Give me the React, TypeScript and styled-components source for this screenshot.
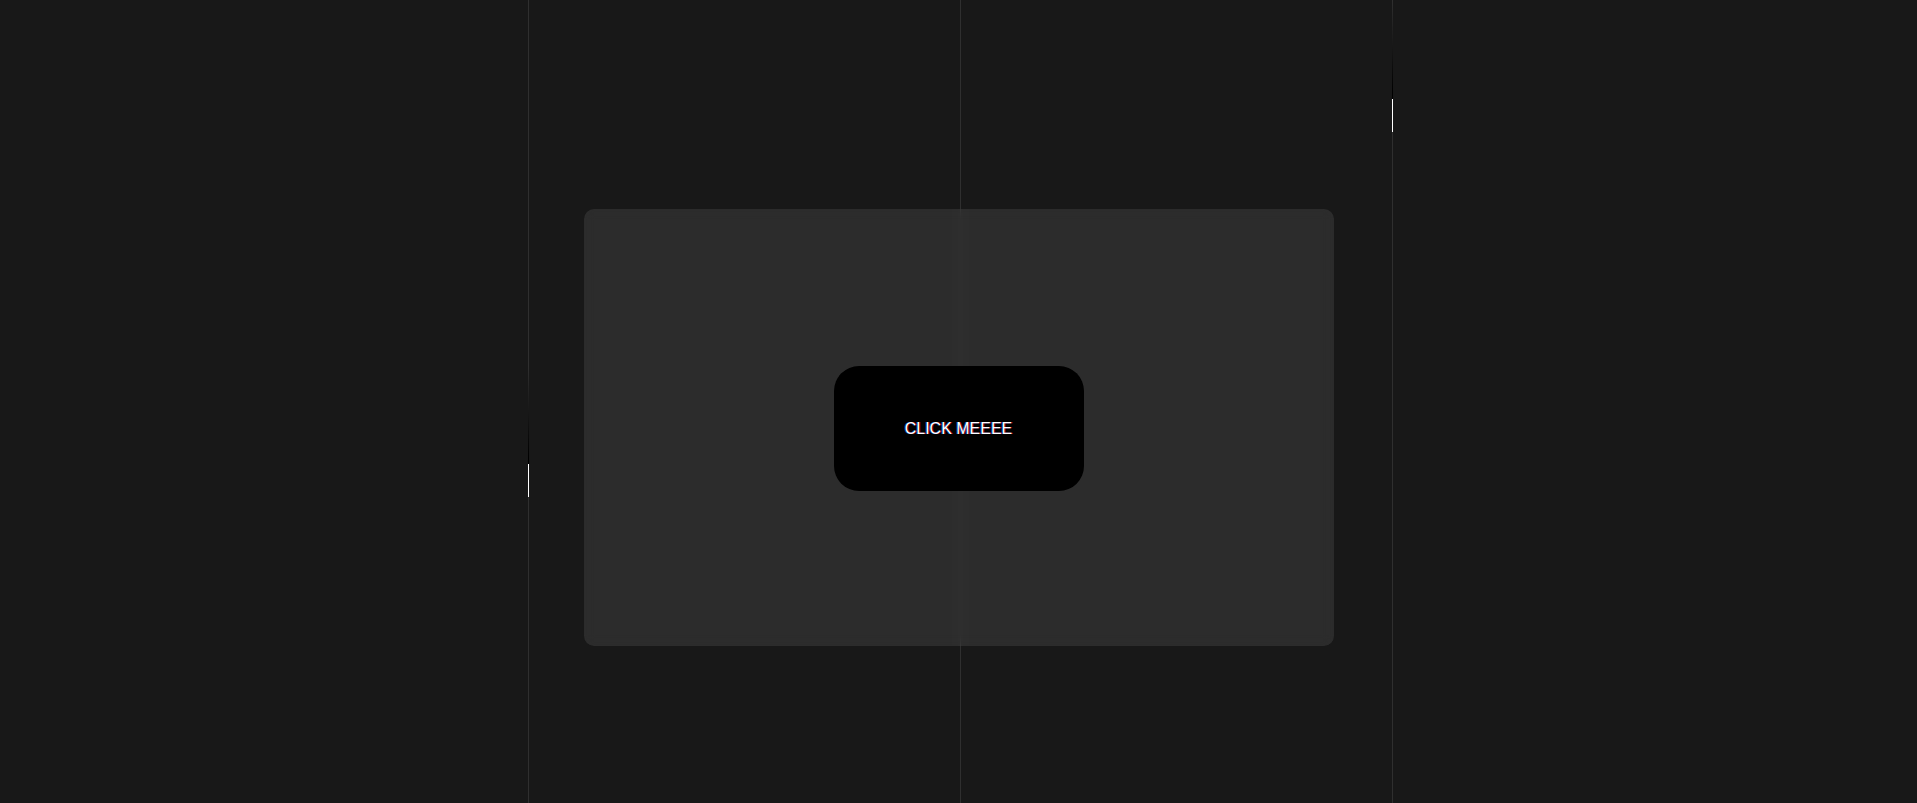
import React from "react";
import styled, { createGlobalStyle } from "styled-components";

const GlobalStyle = createGlobalStyle`
  html, body {
    margin: 0;
    padding: 0;
    background: #181818;
    font-family: "Liberation Sans", Arial, sans-serif;
  }
  #root {
    min-height: 100vh;
  }
`;

const Page = styled.main`
  position: relative;
  height: 100vh;
  overflow: hidden;
  background: #181818;
  display: flex;
  flex-direction: column;
  align-items: center;
  padding-top: 209px;
  box-sizing: border-box;
`;

const Lines = styled.div`
  position: absolute;
  inset: 0;
  display: flex;
  gap: 431px;
  padding-left: 528px;
  pointer-events: none;
`;

const Line = styled.div`
  position: relative;
  width: 1px;
  height: 100%;
  background: #2f2f2f;
`;

const Beam = styled.span<{ $top: number }>`
  position: absolute;
  left: 0;
  top: ${(p) => p.$top}px;
  width: 1px;
  height: 131px;
  background: linear-gradient(
    to bottom,
    rgba(0, 0, 0, 0) 0%,
    #000 70%,
    #000 75%,
    #fff 75%,
    #fff 100%
  );
`;

const Card = styled.section`
  position: relative;
  width: 750px;
  height: 437px;
  border-radius: 10px;
  background: rgba(255, 255, 255, 0.09);
  backdrop-filter: blur(6px);
  display: flex;
  align-items: center;
  justify-content: center;
  padding-top: 2px;
  box-sizing: border-box;
`;

const GlitchButton = styled.button`
  width: 250px;
  height: 125px;
  border: none;
  border-radius: 25px;
  background: #000;
  color: #fff;
  font-family: "Liberation Sans", Arial, sans-serif;
  font-size: 16px;
  letter-spacing: 0;
  cursor: pointer;
  text-shadow: -1px 0 rgba(0, 120, 255, 0.6), 1px 0 rgba(255, 0, 40, 0.6);
`;

export default function App() {
  return (
    <>
      <GlobalStyle />
      <Page>
        <Lines>
          <Line>
            <Beam $top={366} />
          </Line>
          <Line />
          <Line>
            <Beam $top={1} />
          </Line>
        </Lines>
        <Card>
          <GlitchButton>CLICK MEEEE</GlitchButton>
        </Card>
      </Page>
    </>
  );
}
